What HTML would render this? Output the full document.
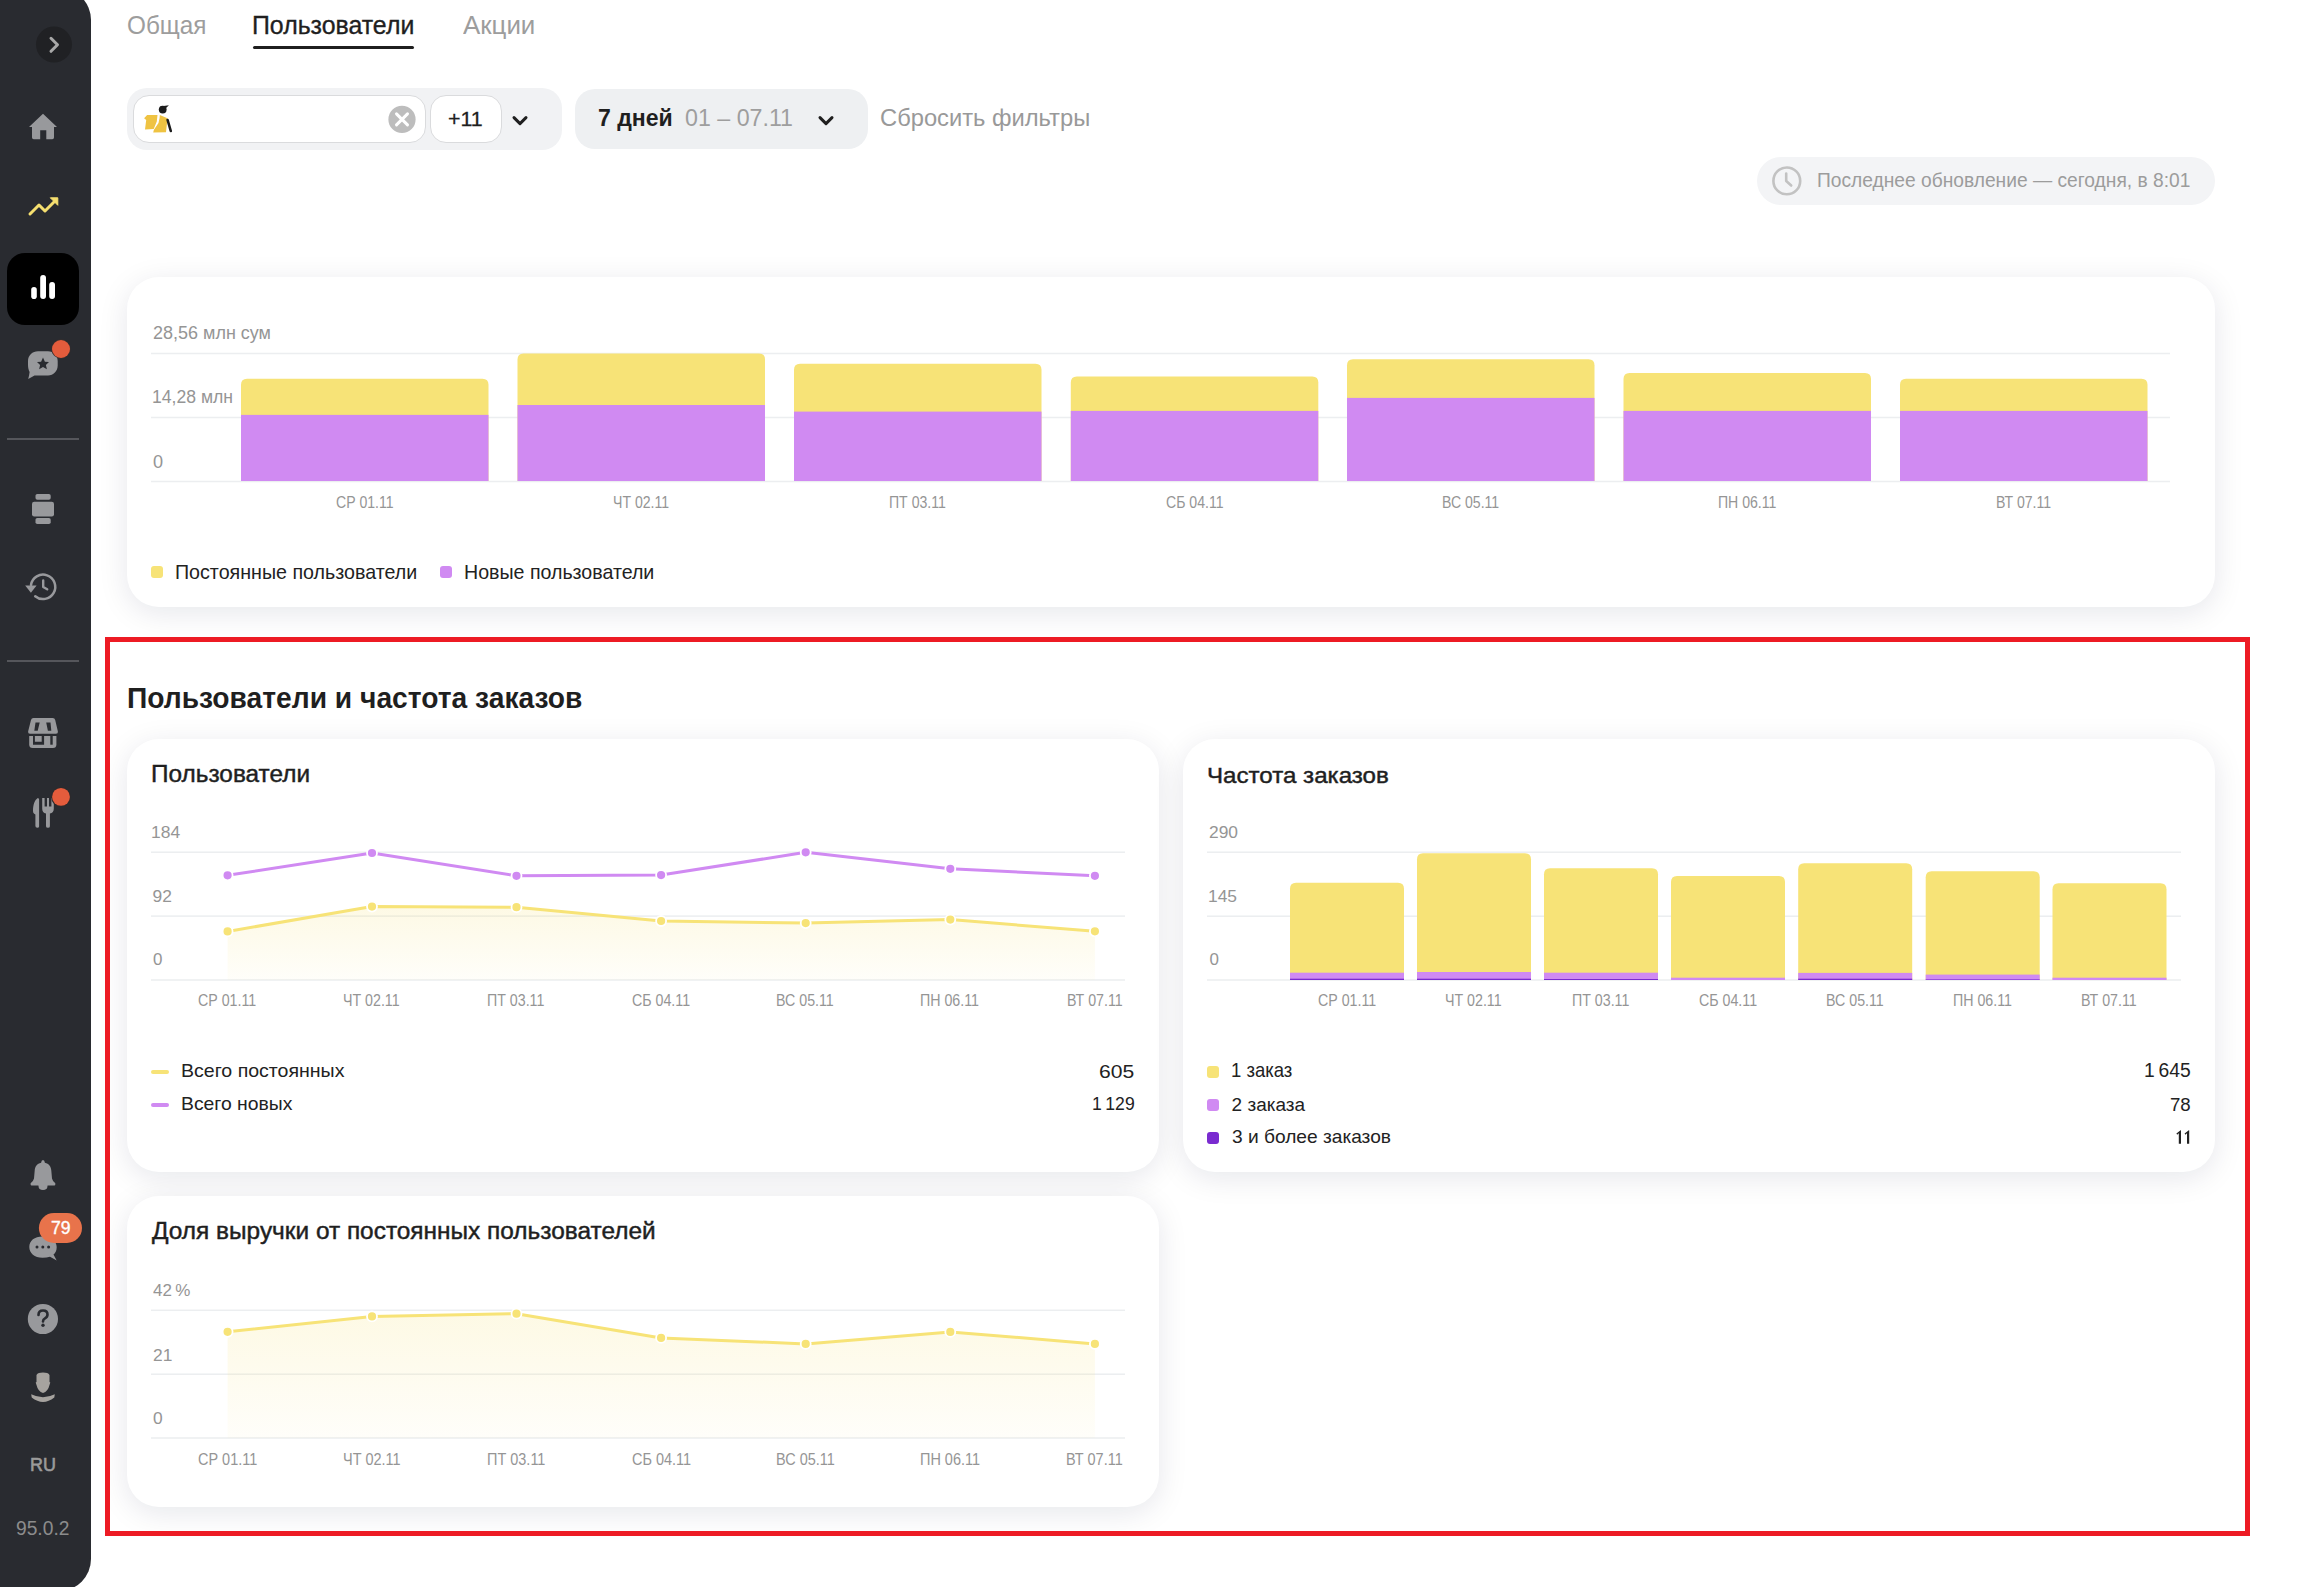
<!DOCTYPE html>
<html lang="ru"><head><meta charset="utf-8"><title>Пользователи</title>
<style>
html,body{margin:0;padding:0;background:#fff;width:2297px;height:1587px;overflow:hidden;position:relative}
.t{position:absolute;font-family:"Liberation Sans",sans-serif;line-height:1;white-space:nowrap;transform-origin:0 0}
.card{position:absolute;background:#fff;border-radius:32px;box-shadow:0 6px 30px rgba(0,20,60,0.10);}
</style></head><body>
<div class="card" style="left:127px;top:277px;width:2088px;height:330px;"></div>
<div class="card" style="left:127px;top:739px;width:1032px;height:433px;"></div>
<div class="card" style="left:1183px;top:739px;width:1032px;height:433px;"></div>
<div class="card" style="left:127px;top:1196px;width:1032px;height:311px;"></div>
<div style="position:absolute;left:253px;top:46px;width:161px;height:3px;background:#1f1f1f;border-radius:1.5px;"></div>
<div style="position:absolute;left:127px;top:88px;width:435px;height:62px;background:#f1f2f4;border-radius:20px;"></div>
<div style="position:absolute;left:133px;top:95px;width:293px;height:47.5px;box-sizing:border-box;background:#fff;border:1px solid #dadbdd;border-radius:16px"></div>
<div style="position:absolute;left:430px;top:95px;width:72px;height:47.5px;box-sizing:border-box;background:#fff;border:1px solid #dadbdd;border-radius:16px"></div>
<div style="position:absolute;left:575px;top:89px;width:292.5px;height:60px;background:#eef0f2;border-radius:20px;"></div>
<svg style="position:absolute;left:0;top:0" width="2297" height="1587" viewBox="0 0 2297 1587">
<g>
<polygon points="144.1,118.2 147.1,115 157.5,115 156.8,121.6 153.7,129 145,129.5 146.2,120" fill="#efc342"/>
<polygon points="159.8,115 167.5,118.2 166,132.3 153.2,132.5 153.9,129.8 158.5,123 159.6,118" fill="#efc342"/>
<circle cx="162.7" cy="109.6" r="3.9" fill="#1c1c1c"/>
<path d="M160,106.5 L168.9,105.2 L165,109 Z" fill="#1c1c1c"/>
<path d="M167.6,120 L170.8,131" stroke="#1c1c1c" stroke-width="2.6" stroke-linecap="round"/>
<circle cx="402" cy="119.4" r="13.6" fill="#bdbdbd"/>
<path d="M396.5,113.9 L407.5,124.9 M407.5,113.9 L396.5,124.9" stroke="#fff" stroke-width="3" stroke-linecap="round"/>
<polyline points="514,117.6 520,123.6 526,117.6" fill="none" stroke="#1f1f1f" stroke-width="3" stroke-linecap="round" stroke-linejoin="round"/>
<polyline points="820,117.6 826,123.6 832,117.6" fill="none" stroke="#1f1f1f" stroke-width="3" stroke-linecap="round" stroke-linejoin="round"/>
</g></svg>
<div style="position:absolute;left:1757px;top:157px;width:457.5px;height:48px;background:#f3f4f6;border-radius:24px;"></div>
<svg style="position:absolute;left:0;top:0" width="2297" height="1587" viewBox="0 0 2297 1587">
<circle cx="1786.8" cy="180.9" r="13.4" fill="none" stroke="#c2c2c2" stroke-width="2.6"/>
<polyline points="1786.2,173.5 1786.2,181 1791.2,185.5" fill="none" stroke="#c2c2c2" stroke-width="2.6" stroke-linecap="round" stroke-linejoin="round"/>
</svg>
<svg style="position:absolute;left:0;top:0" width="2297" height="1587" viewBox="0 0 2297 1587">
<rect x="151" y="352.75" width="2019" height="1.5" fill="#eceef0"/>
<rect x="151" y="416.75" width="2019" height="1.5" fill="#eceef0"/>
<rect x="151" y="480.75" width="2019" height="1.5" fill="#eceef0"/>
<path d="M241,481.0 L241,384.7 Q241,378.7 247,378.7 L482.5,378.7 Q488.5,378.7 488.5,384.7 L488.5,481.0 Z" fill="#f7e377"/>
<rect x="241" y="414.9" width="247.5" height="66.10000000000002" fill="#d08af2"/>
<path d="M517.5,481.0 L517.5,359.4 Q517.5,353.4 523.5,353.4 L759.0,353.4 Q765.0,353.4 765.0,359.4 L765.0,481.0 Z" fill="#f7e377"/>
<rect x="517.5" y="405" width="247.5" height="76" fill="#d08af2"/>
<path d="M794,481.0 L794,369.75 Q794,363.75 800,363.75 L1035.5,363.75 Q1041.5,363.75 1041.5,369.75 L1041.5,481.0 Z" fill="#f7e377"/>
<rect x="794" y="411.6" width="247.5" height="69.39999999999998" fill="#d08af2"/>
<path d="M1070.8,481.0 L1070.8,382.4 Q1070.8,376.4 1076.8,376.4 L1312.3,376.4 Q1318.3,376.4 1318.3,382.4 L1318.3,481.0 Z" fill="#f7e377"/>
<rect x="1070.8" y="410.9" width="247.5" height="70.10000000000002" fill="#d08af2"/>
<path d="M1347,481.0 L1347,365.2 Q1347,359.2 1353,359.2 L1588.5,359.2 Q1594.5,359.2 1594.5,365.2 L1594.5,481.0 Z" fill="#f7e377"/>
<rect x="1347" y="397.9" width="247.5" height="83.10000000000002" fill="#d08af2"/>
<path d="M1623.5,481 L1623.5,379 Q1623.5,373 1629.5,373 L1865.0,373 Q1871.0,373 1871.0,379 L1871.0,481 Z" fill="#f7e377"/>
<rect x="1623.5" y="410.9" width="247.5" height="70.10000000000002" fill="#d08af2"/>
<path d="M1900,481.0 L1900,384.7 Q1900,378.7 1906,378.7 L2141.5,378.7 Q2147.5,378.7 2147.5,384.7 L2147.5,481.0 Z" fill="#f7e377"/>
<rect x="1900" y="410.9" width="247.5" height="70.10000000000002" fill="#d08af2"/>
<rect x="151" y="566" width="12" height="12" rx="3" fill="#f7e377"/>
<rect x="440" y="566" width="12" height="12" rx="3" fill="#d08af2"/>
<rect x="151" y="851.45" width="974" height="1.5" fill="#eceef0"/>
<rect x="151" y="915.35" width="974" height="1.5" fill="#eceef0"/>
<rect x="151" y="979.25" width="974" height="1.5" fill="#eceef0"/>
<defs><linearGradient id="ga" x1="0" y1="0" x2="0" y2="1"><stop offset="0" stop-color="#f7e27a" stop-opacity="0.2"/><stop offset="1" stop-color="#f7e27a" stop-opacity="0.04"/></linearGradient></defs>
<path d="M227.6,931.4 L372,906.6 L516.5,907.2 L661.1,921 L805.7,923.1 L950.3,919.6 L1094.9,931.3 L1094.9,980 L227.6,980 Z" fill="url(#ga)"/>
<polyline points="227.6,875.3 372,853 516.5,875.8 661.1,875.1 805.7,852.3 950.3,868.8 1094.9,875.8" fill="none" stroke="#d08af2" stroke-width="3" stroke-linejoin="round"/>
<circle cx="227.6" cy="875.3" r="5" fill="#d08af2" stroke="#fff" stroke-width="1.8"/>
<circle cx="372" cy="853" r="5" fill="#d08af2" stroke="#fff" stroke-width="1.8"/>
<circle cx="516.5" cy="875.8" r="5" fill="#d08af2" stroke="#fff" stroke-width="1.8"/>
<circle cx="661.1" cy="875.1" r="5" fill="#d08af2" stroke="#fff" stroke-width="1.8"/>
<circle cx="805.7" cy="852.3" r="5" fill="#d08af2" stroke="#fff" stroke-width="1.8"/>
<circle cx="950.3" cy="868.8" r="5" fill="#d08af2" stroke="#fff" stroke-width="1.8"/>
<circle cx="1094.9" cy="875.8" r="5" fill="#d08af2" stroke="#fff" stroke-width="1.8"/>
<polyline points="227.6,931.4 372,906.6 516.5,907.2 661.1,921 805.7,923.1 950.3,919.6 1094.9,931.3" fill="none" stroke="#f7e377" stroke-width="3" stroke-linejoin="round"/>
<circle cx="227.6" cy="931.4" r="5" fill="#f7e377" stroke="#fff" stroke-width="1.8"/>
<circle cx="372" cy="906.6" r="5" fill="#f7e377" stroke="#fff" stroke-width="1.8"/>
<circle cx="516.5" cy="907.2" r="5" fill="#f7e377" stroke="#fff" stroke-width="1.8"/>
<circle cx="661.1" cy="921" r="5" fill="#f7e377" stroke="#fff" stroke-width="1.8"/>
<circle cx="805.7" cy="923.1" r="5" fill="#f7e377" stroke="#fff" stroke-width="1.8"/>
<circle cx="950.3" cy="919.6" r="5" fill="#f7e377" stroke="#fff" stroke-width="1.8"/>
<circle cx="1094.9" cy="931.3" r="5" fill="#f7e377" stroke="#fff" stroke-width="1.8"/>
<rect x="151" y="1070" width="18" height="4" rx="2" fill="#f7e377"/>
<rect x="151" y="1103" width="18" height="4" rx="2" fill="#d08af2"/>
<rect x="1207" y="851.45" width="974" height="1.5" fill="#eceef0"/>
<rect x="1207" y="915.45" width="974" height="1.5" fill="#eceef0"/>
<rect x="1207" y="979.25" width="974" height="1.5" fill="#eceef0"/>
<path d="M1290,980.0 L1290,888.8 Q1290,882.8 1296,882.8 L1398,882.8 Q1404,882.8 1404,888.8 L1404,980.0 Z" fill="#f7e377"/>
<rect x="1290" y="972.7" width="114" height="7.2999999999999545" fill="#d08af2"/>
<rect x="1290" y="978.7" width="114" height="1.3" fill="#7a2bd0"/>
<path d="M1417,980.0 L1417,859.3 Q1417,853.3 1423,853.3 L1525,853.3 Q1531,853.3 1531,859.3 L1531,980.0 Z" fill="#f7e377"/>
<rect x="1417" y="972" width="114" height="8" fill="#d08af2"/>
<rect x="1417" y="978.7" width="114" height="1.3" fill="#7a2bd0"/>
<path d="M1544,980.0 L1544,874.2 Q1544,868.2 1550,868.2 L1652,868.2 Q1658,868.2 1658,874.2 L1658,980.0 Z" fill="#f7e377"/>
<rect x="1544" y="972.7" width="114" height="7.2999999999999545" fill="#d08af2"/>
<rect x="1544" y="979.0" width="114" height="1.0" fill="#7a2bd0"/>
<path d="M1671,980.0 L1671,882.1 Q1671,876.1 1677,876.1 L1779,876.1 Q1785,876.1 1785,882.1 L1785,980.0 Z" fill="#f7e377"/>
<rect x="1671" y="977.7" width="114" height="2.2999999999999545" fill="#d08af2"/>
<path d="M1798.2,980.0 L1798.2,869.2 Q1798.2,863.2 1804.2,863.2 L1906.2,863.2 Q1912.2,863.2 1912.2,869.2 L1912.2,980.0 Z" fill="#f7e377"/>
<rect x="1798.2" y="972.9" width="114" height="7.100000000000023" fill="#d08af2"/>
<rect x="1798.2" y="978.7" width="114" height="1.3" fill="#7a2bd0"/>
<path d="M1925.7,980.0 L1925.7,877.2 Q1925.7,871.2 1931.7,871.2 L2033.7,871.2 Q2039.7,871.2 2039.7,877.2 L2039.7,980.0 Z" fill="#f7e377"/>
<rect x="1925.7" y="974.6" width="114" height="5.399999999999977" fill="#d08af2"/>
<rect x="1925.7" y="979.4" width="114" height="0.6" fill="#7a2bd0"/>
<path d="M2052.5,980.0 L2052.5,889.2 Q2052.5,883.2 2058.5,883.2 L2160.5,883.2 Q2166.5,883.2 2166.5,889.2 L2166.5,980.0 Z" fill="#f7e377"/>
<rect x="2052.5" y="977.7" width="114" height="2.2999999999999545" fill="#d08af2"/>
<rect x="1207" y="1066" width="12" height="12" rx="3" fill="#f7e377"/>
<rect x="1207" y="1099" width="12" height="12" rx="3" fill="#d08af2"/>
<rect x="1207" y="1132" width="12" height="12" rx="3" fill="#7a2bd0"/>
<rect x="151" y="1309.55" width="974" height="1.5" fill="#eceef0"/>
<rect x="151" y="1373.45" width="974" height="1.5" fill="#eceef0"/>
<rect x="151" y="1437.25" width="974" height="1.5" fill="#eceef0"/>
<defs><linearGradient id="gb" x1="0" y1="0" x2="0" y2="1"><stop offset="0" stop-color="#f7e27a" stop-opacity="0.2"/><stop offset="1" stop-color="#f7e27a" stop-opacity="0.04"/></linearGradient></defs>
<path d="M227.6,1331.8 L372,1316.4 L516.5,1313.7 L661.1,1337.9 L805.7,1343.9 L950.3,1331.9 L1094.9,1343.9 L1094.9,1438 L227.6,1438 Z" fill="url(#gb)"/>
<polyline points="227.6,1331.8 372,1316.4 516.5,1313.7 661.1,1337.9 805.7,1343.9 950.3,1331.9 1094.9,1343.9" fill="none" stroke="#f7e377" stroke-width="3" stroke-linejoin="round"/>
<circle cx="227.6" cy="1331.8" r="5" fill="#f7e377" stroke="#fff" stroke-width="1.8"/>
<circle cx="372" cy="1316.4" r="5" fill="#f7e377" stroke="#fff" stroke-width="1.8"/>
<circle cx="516.5" cy="1313.7" r="5" fill="#f7e377" stroke="#fff" stroke-width="1.8"/>
<circle cx="661.1" cy="1337.9" r="5" fill="#f7e377" stroke="#fff" stroke-width="1.8"/>
<circle cx="805.7" cy="1343.9" r="5" fill="#f7e377" stroke="#fff" stroke-width="1.8"/>
<circle cx="950.3" cy="1331.9" r="5" fill="#f7e377" stroke="#fff" stroke-width="1.8"/>
<circle cx="1094.9" cy="1343.9" r="5" fill="#f7e377" stroke="#fff" stroke-width="1.8"/>
<path d="M2176.4,1133.6 L2180.6,1130.2 L2181,1130.2 L2181,1143.8 L2178.8,1143.8 L2178.8,1133.2 L2177.2,1134.8 Z M2184.6,1133.6 L2188.8,1130.2 L2189.2,1130.2 L2189.2,1143.8 L2187,1143.8 L2187,1133.2 L2185.4,1134.8 Z" fill="#222"/>
</svg>
<div style="position:absolute;left:105px;top:637px;width:2145px;height:899px;box-sizing:border-box;border:5px solid #ed1b24"></div>
<div style="position:absolute;left:0;top:-12px;width:91px;height:1603px;background:#292b30;border-radius:0 32px 32px 0"></div>
<svg style="position:absolute;left:0;top:0" width="91" height="1587" viewBox="0 0 91 1587">
<circle cx="54" cy="44.5" r="18" fill="#202124"/>
<polyline points="51,38.3 57.5,44.7 51,51.3" fill="none" stroke="#a8a8a8" stroke-width="3" stroke-linecap="round" stroke-linejoin="round"/>
<path d="M43,113.8 L57,127 L54,127 L54,137.5 Q54,139.2 52.3,139.2 L46.3,139.2 L46.3,130.3 L40.2,130.3 L40.2,139.2 L33.7,139.2 Q32,139.2 32,137.5 L32,127 L29,127 Z" fill="#98999c"/>
<polyline points="30,214 39,205 45,211 55.5,200.5" fill="none" stroke="#f5df6f" stroke-width="3" stroke-linecap="round" stroke-linejoin="round"/>
<polygon points="50.3,197.8 57.8,197.8 57.8,205.3" fill="#f5df6f" stroke="#f5df6f" stroke-width="1" stroke-linejoin="round"/>
<rect x="7" y="253" width="72" height="72" rx="18" fill="#000"/>
<rect x="31.2" y="287" width="5.6" height="12" rx="2.8" fill="#fff"/>
<rect x="40.2" y="275" width="5.8" height="24" rx="2.9" fill="#fff"/>
<rect x="49.2" y="282" width="5.8" height="17" rx="2.9" fill="#fff"/>
<path d="M38,351.3 L48,351.3 C53.5,351.3 57.7,355.5 57.7,361 L57.7,365.5 C57.7,371 53.5,375.5 48,375.5 L34.5,375.5 C32.5,376.5 30.3,378 28.2,379 C28.8,377 29.3,374.5 29.6,372 C28.6,370 28,367.5 28,365 L28,361 C28,355.5 32.5,351.3 38,351.3 Z" fill="#98999c"/>
<path d="M43,357.6 L44.9,361.7 L49,362.1 L45.9,364.9 L46.9,369.2 L43,366.9 L39.1,369.2 L40.1,364.9 L37,362.1 L41.1,361.7 Z" fill="#292b30"/>
<circle cx="61" cy="349" r="9.7" fill="#3a2e2c"/><circle cx="61" cy="349" r="9" fill="#e45c3c"/>
<rect x="7" y="438" width="72" height="2" fill="#55565b"/>
<rect x="35.5" y="494" width="15.2" height="5.7" rx="1.8" fill="#98999c"/>
<rect x="32" y="501.7" width="22" height="14.7" rx="2.2" fill="#98999c"/>
<rect x="35.5" y="518" width="15.2" height="6" rx="1.8" fill="#98999c"/>
<path d="M31,585 A12.2,12.2 0 1 1 35.2,596.2" fill="none" stroke="#98999c" stroke-width="2.5" stroke-linecap="round"/>
<polygon points="25.2,585.5 36.6,585.5 30.9,592.7" fill="#98999c"/>
<polyline points="43.2,580.5 43.2,587 47.2,589.3" fill="none" stroke="#98999c" stroke-width="2.4" stroke-linecap="round" stroke-linejoin="round"/>
<rect x="7" y="660" width="72" height="2" fill="#55565b"/>
<path d="M33.5,717.9 L52.7,717.9 Q54.7,717.9 55.2,720 L57.9,731.5 Q58.2,733.8 56,733.8 L30,733.8 Q27.8,733.8 28.1,731.5 L31,720 Q31.5,717.9 33.5,717.9 Z" fill="#98999c"/>
<path d="M35.5,722.5 L39.7,722.5 L37.7,730.7 L34.3,730.7 Z M46.2,722.5 L50.5,722.5 L51.3,730.7 L47.9,730.7 Z" fill="#292b30"/>
<path d="M29.2,736 L56.4,736 L56.4,744.5 Q56.4,748 52.9,748 L32.7,748 Q29.2,748 29.2,744.5 Z" fill="#98999c"/>
<path d="M33,736 L34.9,736 L34.9,741.7 L41.7,741.7 L41.7,736 L44.1,736 L44.1,744.7 L33,744.7 Z" fill="#292b30"/>
<rect x="50.3" y="736" width="2.4" height="8.7" fill="#292b30"/>
<path d="M37.8,798 Q39.1,798 39.1,799.5 L39.1,826.5 Q39.1,827.8 37.3,827.8 Q35.4,827.8 35.4,826 L35.4,814.5 L34.2,813.8 Q33,813 33,811 C33,805 34.5,800 37.8,798 Z" fill="#98999c"/>
<path d="M42.2,798 L44.6,798 L44.6,806.6 L47,806.6 L47,798 L49,798 L49,806.6 L51.4,806.6 L51.4,798 L53.8,798 L53.8,808.5 Q53.8,812.8 49.9,813.6 L49.9,826.3 Q49.9,827.8 48,827.8 Q46,827.8 46,826.3 L46,813.6 Q42.2,812.8 42.2,808.5 Z" fill="#98999c"/>
<circle cx="61" cy="796.9" r="9.9" fill="#2f2a2b"/><circle cx="61" cy="796.9" r="8.9" fill="#e45c3c"/>
<path d="M43,1160 Q44.6,1160 44.9,1162.8 C49,1163.8 51,1166.5 51.3,1170.5 L52,1178.5 Q52.6,1181.2 55.3,1183.3 L55.3,1184.4 Q55.3,1185.4 54.3,1185.4 L47.6,1185.4 Q47.4,1190 43,1190 Q38.6,1190 38.4,1185.4 L31.6,1185.4 Q30.6,1185.4 30.6,1184.4 L30.6,1183.3 Q33.4,1181.2 34,1178.5 L34.7,1170.5 C35,1166.5 37,1163.8 41.1,1162.8 Q41.4,1160 43,1160 Z" fill="#98999c"/>
<path d="M42.5,1236.4 C50.5,1236.4 56.7,1240.5 56.7,1247 C56.7,1250.5 55.5,1253 53.5,1254.5 L56.7,1260.5 L50,1256.8 C47.8,1257.5 45.3,1257.8 42.5,1257.8 C34.5,1257.8 29.3,1253 29.3,1247 C29.3,1240.5 34.5,1236.4 42.5,1236.4 Z" fill="#98999c"/>
<circle cx="37" cy="1247" r="1.5" fill="#292b30"/><circle cx="42.8" cy="1247" r="1.5" fill="#292b30"/><circle cx="48.6" cy="1247" r="1.5" fill="#292b30"/>
<rect x="38.9" y="1213" width="43.1" height="30" rx="15" fill="#e8734b"/>
<circle cx="42.9" cy="1319" r="15.1" fill="#98999c"/>
<path d="M38.5,1315 Q38.5,1310.5 43,1310.5 Q47.5,1310.5 47.5,1314.5 Q47.5,1317 45,1318.3 Q43,1319.3 43,1321.5" fill="none" stroke="#292b30" stroke-width="2.6" stroke-linecap="round"/>
<circle cx="43" cy="1325.3" r="1.7" fill="#292b30"/>
<path d="M36.5,1375 Q38,1372.6 43,1372.6 Q48,1372.6 49.5,1375 L49.5,1382 L50.3,1382.5 L49.5,1385 Q48,1391.5 43,1393 Q38,1391.5 36.5,1385 L35.7,1382.5 L36.5,1382 Z" fill="#a6a39f"/>
<path d="M31.2,1394.3 Q43,1400.2 54.8,1394.3 L54.3,1397.6 Q43,1406.5 31.7,1397.6 Z" fill="#a6a39f"/>
</svg>
<div class="t" style="left:126.63px;top:12.99px;font-size:25.07px;color:#9d9d9d;transform:scaleX(0.9697);">Общая</div>
<div class="t" style="left:252.02px;top:12.99px;font-size:25.07px;color:#1f1f1f;transform:scaleX(0.9920);-webkit-text-stroke:0.35px #1f1f1f;">Пользователи</div>
<div class="t" style="left:462.70px;top:12.99px;font-size:25.07px;color:#9d9d9d;transform:scaleX(1.0328);">Акции</div>
<div class="t" style="left:447.98px;top:108.14px;font-size:21.01px;color:#1f1f1f;transform:scaleX(1.0190);-webkit-text-stroke:0.3px #1f1f1f;">+11</div>
<div class="t" style="left:597.87px;top:106.24px;font-size:24.78px;color:#1f1f1f;font-weight:700;transform:scaleX(0.9308);">7 дней</div>
<div class="t" style="left:685.40px;top:106.24px;font-size:24.78px;color:#9e9e9e;transform:scaleX(0.9376);">01 – 07.11</div>
<div class="t" style="left:879.54px;top:106.24px;font-size:24.78px;color:#999999;transform:scaleX(0.9577);">Сбросить фильтры</div>
<div class="t" style="left:1817.02px;top:171.37px;font-size:19.57px;color:#9c9c9c;transform:scaleX(0.9813);">Последнее обновление — сегодня, в 8:01</div>
<div class="t" style="left:153.00px;top:324.67px;font-size:17.68px;color:#959595;transform:scaleX(1.0180);">28,56 млн сум</div>
<div class="t" style="left:151.54px;top:388.35px;font-size:18.41px;color:#959595;transform:scaleX(0.9556);">14,28 млн</div>
<div class="t" style="left:153.00px;top:452.60px;font-size:18.12px;color:#959595;">0</div>
<div class="t" style="left:336.24px;top:494.90px;font-size:15.65px;color:#959595;transform:scaleX(0.9000);">СР 01.11</div>
<div class="t" style="left:613.08px;top:494.90px;font-size:15.65px;color:#959595;transform:scaleX(0.9000);">ЧТ 02.11</div>
<div class="t" style="left:889.21px;top:494.90px;font-size:15.65px;color:#959595;transform:scaleX(0.9000);">ПТ 03.11</div>
<div class="t" style="left:1166.12px;top:494.90px;font-size:15.65px;color:#959595;transform:scaleX(0.9000);">СБ 04.11</div>
<div class="t" style="left:1442.03px;top:494.90px;font-size:15.65px;color:#959595;transform:scaleX(0.9000);">ВС 05.11</div>
<div class="t" style="left:1717.93px;top:494.90px;font-size:15.65px;color:#959595;transform:scaleX(0.9000);">ПН 06.11</div>
<div class="t" style="left:1996.05px;top:494.90px;font-size:15.65px;color:#959595;transform:scaleX(0.9000);">ВТ 07.11</div>
<div class="t" style="left:174.74px;top:562.23px;font-size:20.43px;color:#222;transform:scaleX(0.9618);">Постоянные пользователи</div>
<div class="t" style="left:464.04px;top:562.23px;font-size:20.43px;color:#222;transform:scaleX(0.9595);">Новые пользователи</div>
<div class="t" style="left:127.34px;top:682.51px;font-size:29.28px;color:#1f1f1f;font-weight:700;transform:scaleX(0.9637);">Пользователи и частота заказов</div>
<div class="t" style="left:151.46px;top:763.47px;font-size:23.33px;color:#1f1f1f;transform:scaleX(1.0444);-webkit-text-stroke:0.45px #1f1f1f;">Пользователи</div>
<div class="t" style="left:1207.35px;top:763.53px;font-size:22.9px;color:#1f1f1f;transform:scaleX(1.0537);-webkit-text-stroke:0.45px #1f1f1f;">Частота заказов</div>
<div class="t" style="left:151.60px;top:1220.22px;font-size:23.62px;color:#1f1f1f;transform:scaleX(1.0338);-webkit-text-stroke:0.45px #1f1f1f;">Доля выручки от постоянных пользователей</div>
<div class="t" style="left:151.49px;top:824.22px;font-size:17.39px;color:#959595;transform:scaleX(1.0061);">184</div>
<div class="t" style="left:152.50px;top:888.22px;font-size:17.39px;color:#959595;">92</div>
<div class="t" style="left:153.00px;top:952.28px;font-size:16.96px;color:#959595;">0</div>
<div class="t" style="left:198.39px;top:993.37px;font-size:15.8px;color:#959595;transform:scaleX(0.9000);">СР 01.11</div>
<div class="t" style="left:343.14px;top:993.37px;font-size:15.8px;color:#959595;transform:scaleX(0.9000);">ЧТ 02.11</div>
<div class="t" style="left:487.27px;top:993.37px;font-size:15.8px;color:#959595;transform:scaleX(0.9000);">ПТ 03.11</div>
<div class="t" style="left:631.97px;top:993.37px;font-size:15.8px;color:#959595;transform:scaleX(0.9000);">СБ 04.11</div>
<div class="t" style="left:776.28px;top:993.37px;font-size:15.8px;color:#959595;transform:scaleX(0.9000);">ВС 05.11</div>
<div class="t" style="left:920.27px;top:993.37px;font-size:15.8px;color:#959595;transform:scaleX(0.9000);">ПН 06.11</div>
<div class="t" style="left:1066.51px;top:993.37px;font-size:15.8px;color:#959595;transform:scaleX(0.9000);">ВТ 07.11</div>
<div class="t" style="left:180.66px;top:1061.79px;font-size:18.84px;color:#222;transform:scaleX(1.0376);">Всего постоянных</div>
<div class="t" style="left:180.67px;top:1094.89px;font-size:18.84px;color:#222;transform:scaleX(1.0277);">Всего новых</div>
<div class="t" style="left:1099.40px;top:1061.76px;font-size:18.99px;color:#222;transform:scaleX(1.1120);">605</div>
<div class="t" style="left:1091.77px;top:1094.89px;font-size:18.84px;color:#222;transform:scaleX(0.9347);">1 129</div>
<div class="t" style="left:1209.00px;top:824.22px;font-size:17.39px;color:#959595;">290</div>
<div class="t" style="left:1208.00px;top:888.22px;font-size:17.39px;color:#959595;">145</div>
<div class="t" style="left:1209.50px;top:952.28px;font-size:16.96px;color:#959595;">0</div>
<div class="t" style="left:1317.79px;top:993.37px;font-size:15.8px;color:#959595;transform:scaleX(0.9000);">СР 01.11</div>
<div class="t" style="left:1445.14px;top:993.37px;font-size:15.8px;color:#959595;transform:scaleX(0.9000);">ЧТ 02.11</div>
<div class="t" style="left:1571.77px;top:993.37px;font-size:15.8px;color:#959595;transform:scaleX(0.9000);">ПТ 03.11</div>
<div class="t" style="left:1698.87px;top:993.37px;font-size:15.8px;color:#959595;transform:scaleX(0.9000);">СБ 04.11</div>
<div class="t" style="left:1825.78px;top:993.37px;font-size:15.8px;color:#959595;transform:scaleX(0.9000);">ВС 05.11</div>
<div class="t" style="left:1952.67px;top:993.37px;font-size:15.8px;color:#959595;transform:scaleX(0.9000);">ПН 06.11</div>
<div class="t" style="left:2081.11px;top:993.37px;font-size:15.8px;color:#959595;transform:scaleX(0.9000);">ВТ 07.11</div>
<div class="t" style="left:1230.65px;top:1061.49px;font-size:19.42px;color:#222;transform:scaleX(0.9532);">1 заказ</div>
<div class="t" style="left:1231.60px;top:1094.56px;font-size:18.99px;color:#222;">2 заказа</div>
<div class="t" style="left:1231.60px;top:1127.59px;font-size:18.84px;color:#222;transform:scaleX(1.0169);">3 и более заказов</div>
<div class="t" style="left:2143.81px;top:1061.49px;font-size:19.42px;color:#222;transform:scaleX(0.9942);">1 645</div>
<div class="t" style="left:2169.60px;top:1094.56px;font-size:18.99px;color:#222;transform:scaleX(0.9826);">78</div>
<div class="t" style="left:153.00px;top:1282.32px;font-size:17.39px;color:#959595;transform:scaleX(0.9787);">42 %</div>
<div class="t" style="left:153.00px;top:1346.72px;font-size:17.39px;color:#959595;">21</div>
<div class="t" style="left:153.00px;top:1410.22px;font-size:17.39px;color:#959595;">0</div>
<div class="t" style="left:197.94px;top:1451.32px;font-size:16.09px;color:#959595;transform:scaleX(0.9000);">СР 01.11</div>
<div class="t" style="left:342.70px;top:1451.32px;font-size:16.09px;color:#959595;transform:scaleX(0.9000);">ЧТ 02.11</div>
<div class="t" style="left:486.83px;top:1451.32px;font-size:16.09px;color:#959595;transform:scaleX(0.9000);">ПТ 03.11</div>
<div class="t" style="left:631.52px;top:1451.32px;font-size:16.09px;color:#959595;transform:scaleX(0.9000);">СБ 04.11</div>
<div class="t" style="left:775.84px;top:1451.32px;font-size:16.09px;color:#959595;transform:scaleX(0.9000);">ВС 05.11</div>
<div class="t" style="left:919.82px;top:1451.32px;font-size:16.09px;color:#959595;transform:scaleX(0.9000);">ПН 06.11</div>
<div class="t" style="left:1066.08px;top:1451.32px;font-size:16.09px;color:#959595;transform:scaleX(0.9000);">ВТ 07.11</div>
<div class="t" style="left:29.80px;top:1454.76px;font-size:18.99px;color:#9b9b9b;transform:scaleX(0.9452);-webkit-text-stroke:0.6px #9b9b9b;">RU</div>
<div class="t" style="left:15.75px;top:1518.30px;font-size:20.0px;color:#8c8c8c;transform:scaleX(0.9607);">95.0.2</div>
<div class="t" style="left:51.00px;top:1218.85px;font-size:18.41px;color:#ffffff;transform:scaleX(0.9587);-webkit-text-stroke:0.4px #ffffff;">79</div>
</body></html>
